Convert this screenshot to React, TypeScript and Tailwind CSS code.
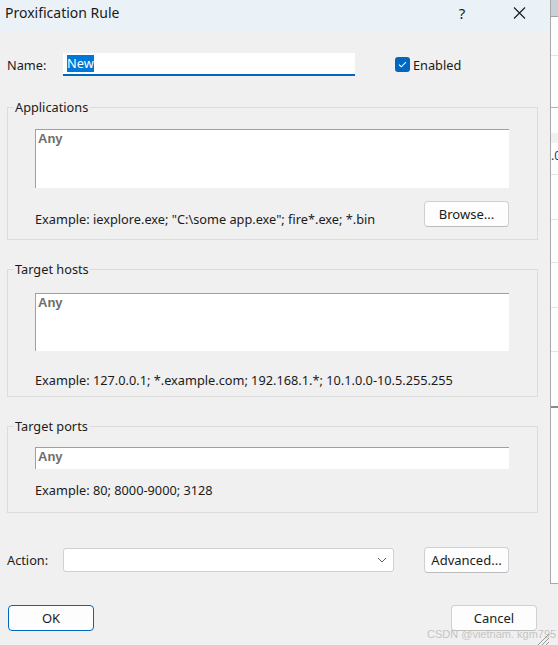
import React from "react";

const font = { fontFamily: '"Noto Sans", "Liberation Sans", sans-serif' };

function Btn({ label, w, primary }: { label: string; w: string; primary?: boolean }) {
  return (
    <button
      className={
        primary
          ? `${w} h-[26px] rounded-[4px] border border-[#0067c0] bg-[#fdfdfd] text-[13px] text-[#1b1b1b] leading-none flex items-center justify-center`
          : `${w} h-[26px] rounded-[4px] border border-[#d0d0d0] border-b-[#bcbcbc] bg-[#fdfdfd] text-[13px] text-[#1b1b1b] leading-none flex items-center justify-center`
      }
    >
      {label}
    </button>
  );
}

function AnyBox({ h }: { h: string }) {
  return (
    <div
      className={`w-[474px] ${h} bg-white border-t border-l border-[#a0a0a0] pl-[2px] pt-[1px] text-[13px] leading-[16px] font-bold text-[#6d6d6d]`}
      style={{ fontFamily: '"Liberation Sans", Arial, sans-serif' }}
    >
      Any
    </div>
  );
}

export default function App() {
  return (
    <div className="w-[558px] h-[645px] flex bg-[#f0f0f0] overflow-hidden relative text-[#1b1b1b]" style={font}>
      {/* Dialog */}
      <div className="w-[550px] h-[645px] flex flex-col bg-[#f0f0f0]">
        {/* Title bar */}
        <div className="h-[31px] bg-[#eaf2f8] flex items-start pt-[3px]">
          <div className="pl-[5px] text-[14px] leading-[20px] text-[#1a1a1a] w-[455px]">Proxification Rule</div>
          <div className="w-[14px] text-[15px] leading-[20px] text-[#1a1a1a] text-center">?</div>
          <div className="ml-[44px] mt-[4px]">
            <svg width="13" height="12" viewBox="0 0 13 12">
              <path d="M1 0.5 L12 11.5 M12 0.5 L1 11.5" stroke="#1a1a1a" strokeWidth="1.1" fill="none" />
            </svg>
          </div>
        </div>

        <div className="flex flex-col pl-[7px] text-[12.75px] leading-[16px]">
          {/* Name row */}
          <div className="mt-[22px] h-[23px] flex items-center">
            <div className="w-[56px]">Name:</div>
            <div className="w-[292px] h-[23px] bg-white border-b-2 border-[#0067c0] flex items-center pl-[4px]">
              <span className="bg-[#0078d7] text-white leading-[17px]">New</span>
            </div>
            <div className="ml-[40px] flex items-center">
              <div className="w-[15px] h-[15px] rounded-[3px] bg-[#0067c0] flex items-center justify-center">
                <svg width="9" height="7" viewBox="0 0 9 7">
                  <path d="M1 3.6 L3.3 5.8 L8 1.2" stroke="white" strokeWidth="1.1" fill="none" />
                </svg>
              </div>
              <span className="ml-[3px]">Enabled</span>
            </div>
          </div>

          {/* Applications */}
          <fieldset className="mt-[23px] w-[531px] border border-[#dcdcdc]">
            <legend className="ml-[6px] px-[1px]">Applications</legend>
            <div className="pl-[27px] pr-[28px] pt-[14px] pb-[12px]">
              <AnyBox h="h-[59px]" />
              <div className="mt-[13px] flex items-end justify-between">
                <span>Example: iexplore.exe; "C:\some app.exe"; fire*.exe; *.bin</span>
                <Btn label="Browse..." w="w-[85px]" />
              </div>
            </div>
          </fieldset>

          {/* Target hosts */}
          <fieldset className="mt-[21px] w-[531px] border border-[#dcdcdc]">
            <legend className="ml-[6px] px-[1px]">Target hosts</legend>
            <div className="pl-[27px] pr-[28px] pt-[16px] pb-[8px]">
              <AnyBox h="h-[58px]" />
              <div className="mt-[21px]">Example: 127.0.0.1; *.example.com; 192.168.1.*; 10.1.0.0-10.5.255.255</div>
            </div>
          </fieldset>

          {/* Target ports */}
          <fieldset className="mt-[21px] w-[531px] border border-[#dcdcdc]">
            <legend className="ml-[6px] px-[1px]">Target ports</legend>
            <div className="pl-[27px] pr-[28px] pt-[13px] pb-[14px]">
              <AnyBox h="h-[22px]" />
              <div className="mt-[13px]">Example: 80; 8000-9000; 3128</div>
            </div>
          </fieldset>

          {/* Action row */}
          <div className="mt-[34px] h-[26px] flex items-center">
            <div className="w-[56px]">Action:</div>
            <div className="w-[331px] h-[24px] bg-white border border-[#d0d0d0] rounded-[3px] flex items-center justify-end pr-[6px]">
              <svg width="10" height="6" viewBox="0 0 10 6">
                <path d="M1 1 L5 5 L9 1" stroke="#5f5f5f" strokeWidth="1" fill="none" />
              </svg>
            </div>
            <div className="ml-[30px]">
              <Btn label="Advanced..." w="w-[85px]" />
            </div>
          </div>

          {/* OK / Cancel */}
          <div className="mt-[32px] flex items-center justify-between w-[530px] pl-[1px]">
            <Btn label="OK" w="w-[86px]" primary />
            <Btn label="Cancel" w="w-[86px]" />
          </div>
        </div>
      </div>

      {/* Background window strip on the right */}
      <div className="w-[8px] flex flex-col">
        <div className="h-[583px] flex flex-col bg-white border-l border-[#a8a8a8]">
          <div className="h-[16px] bg-[#c9d0d6]" />
          <div className="h-[1px] bg-[#9aa3ab]" />
          <div className="h-[38px]" />
          <div className="h-[1px] bg-[#e3e3e3]" />
          <div className="h-[51px]" />
          <div className="h-[1px] bg-[#b0b0b0]" />
          <div className="h-[25px]" />
          <div className="h-[10px] bg-[#f0f0f0]" />
          <div className="h-[6px]" />
          <div className="h-[14px] text-[12px] leading-[14px] text-[#1e3a5f] overflow-hidden whitespace-nowrap">.0</div>
          <div className="h-[11px]" />
          <div className="h-[1px] bg-[#e3e3e3]" />
          <div className="h-[44px]" />
          <div className="h-[1px] bg-[#e3e3e3]" />
          <div className="h-[42px]" />
          <div className="h-[1px] bg-[#e3e3e3]" />
          <div className="h-[44px]" />
          <div className="h-[1px] bg-[#e3e3e3]" />
          <div className="h-[43px]" />
          <div className="h-[1px] bg-[#e3e3e3]" />
          <div className="h-[54px]" />
          <div className="h-[2px] bg-[#8a8a8a]" />
        </div>
        <div className="h-[1px] bg-[#a8a8a8]" />
        <div className="flex-1 bg-[#f0f0f0]" />
      </div>

      {/* Watermark overlay */}
      <div
        className="absolute left-[427px] top-[627px] text-[11px] leading-[14px] text-[#c4c4c4] whitespace-nowrap"
        style={{ fontFamily: '"Liberation Sans", Arial, sans-serif' }}
      >
        CSDN @vietnam. kgm795
      </div>
      {/* Resize grip */}
      <svg className="absolute left-[537px] top-[633px]" width="12" height="12" viewBox="0 0 12 12">
        <path d="M12 1 L1 12 M12 5 L5 12 M12 9 L9 12" stroke="#9a9a9a" strokeWidth="1" fill="none" />
      </svg>
    </div>
  );
}
